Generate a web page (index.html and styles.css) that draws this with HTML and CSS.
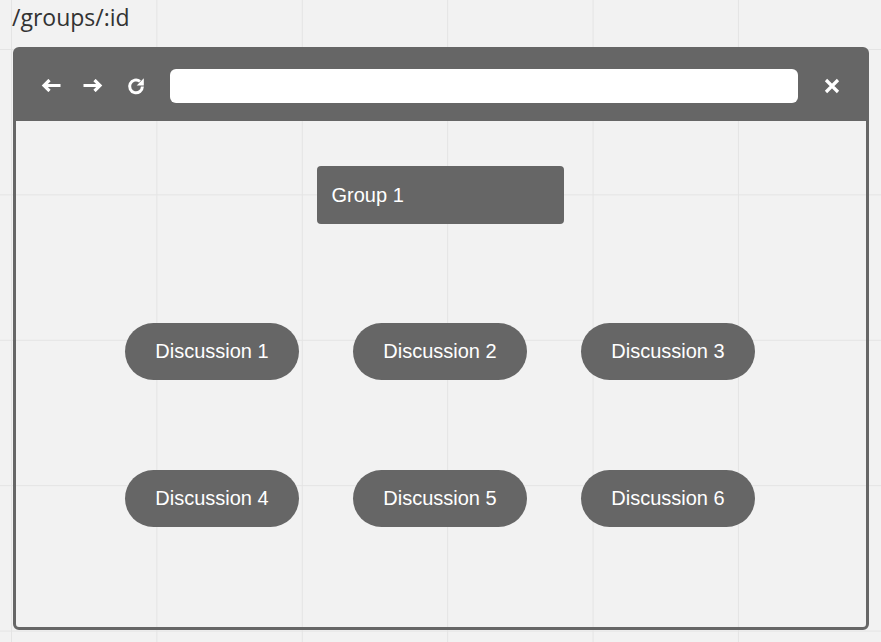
FILE: index.html
```html
<!DOCTYPE html>
<html>
<head>
<meta charset="utf-8">
<link rel="stylesheet" href="styles.css">
</head>
<body>
<div class="title">/groups/:id</div>
<div class="window">
  <div class="toolbar">
    <svg class="icon back" width="20" height="13" viewBox="0 0 20 13"><path d="M3 6.5H19.5M8.5 1L3 6.5L8.5 12" fill="none" stroke="#fff" stroke-width="3.2" stroke-linejoin="miter"/></svg>
    <svg class="icon fwd" width="20" height="13" viewBox="0 0 20 13"><path d="M17 6.5H0.5M11.5 1L17 6.5L11.5 12" fill="none" stroke="#fff" stroke-width="3.2" stroke-linejoin="miter"/></svg>
    <svg class="icon reload" width="18" height="18" viewBox="0 0 18 18"><path d="M13 4.4A6.4 6.4 0 1 0 15.4 9.5" fill="none" stroke="#fff" stroke-width="3"/><polygon points="16.8,1.3 16.8,8.4 9.7,8.4" fill="#fff"/></svg>
    <div class="url"></div>
    <svg class="icon close" width="16" height="16" viewBox="0 0 16 16"><path d="M2 2L14 14M14 2L2 14" fill="none" stroke="#fff" stroke-width="3.2"/></svg>
  </div>
  <div class="content">
    <div class="group">Group 1</div>
    <div class="discussions">
      <div class="pill">Discussion 1</div>
      <div class="pill">Discussion 2</div>
      <div class="pill">Discussion 3</div>
      <div class="pill">Discussion 4</div>
      <div class="pill">Discussion 5</div>
      <div class="pill">Discussion 6</div>
    </div>
  </div>
</div>
</body>
</html>
```

FILE: styles.css
```css
html, body {
  margin: 0;
  padding: 0;
}
body {
  width: 881px;
  height: 642px;
  overflow: hidden;
  background-color: #f2f2f2;
  background-image:
    linear-gradient(to right, #e4e4e4 1px, transparent 1px),
    linear-gradient(to bottom, #e4e4e4 1px, transparent 1px);
  background-size: 145.4px 145.4px;
  background-position: 11px 49px;
}
.title {
  box-sizing: border-box;
  height: 47px;
  padding: 6px 0 0 12px;
  font-family: "Open Sans", sans-serif;
  font-size: 23px;
  line-height: 23px;
  color: #333;
}
.window {
  box-sizing: border-box;
  margin-left: 13px;
  width: 856px;
  height: 583px;
  border: 3px solid #666;
  border-radius: 6px;
  display: flex;
  flex-direction: column;
}
.toolbar {
  height: 71px;
  background: #666;
  display: flex;
  align-items: center;
  padding: 0 26px 0 25px;
  flex-shrink: 0;
}
.icon {
  display: block;
  flex-shrink: 0;
}
.fwd { margin-left: 22px; }
.reload { margin-left: 24px; }
.url {
  flex: 1;
  height: 34px;
  margin: 0 26px 0 25px;
  background: #fff;
  border-radius: 6px;
}
.content {
  flex: 1;
  display: flex;
  flex-direction: column;
  align-items: center;
  padding-top: 45px;
  font-family: "Liberation Sans", Arial, sans-serif;
  font-size: 20px;
  color: #fff;
}
.group {
  box-sizing: border-box;
  width: 247px;
  height: 58px;
  margin-right: 2px;
  background: #666;
  border-radius: 4px;
  padding-left: 15px;
  display: flex;
  align-items: center;
}
.discussions {
  margin-top: 99px;
  margin-right: 2px;
  display: grid;
  grid-template-columns: repeat(3, 174px);
  column-gap: 54px;
  row-gap: 90px;
}
.pill {
  height: 57px;
  border-radius: 29px;
  background: #666;
  display: flex;
  align-items: center;
  justify-content: center;
}
```
